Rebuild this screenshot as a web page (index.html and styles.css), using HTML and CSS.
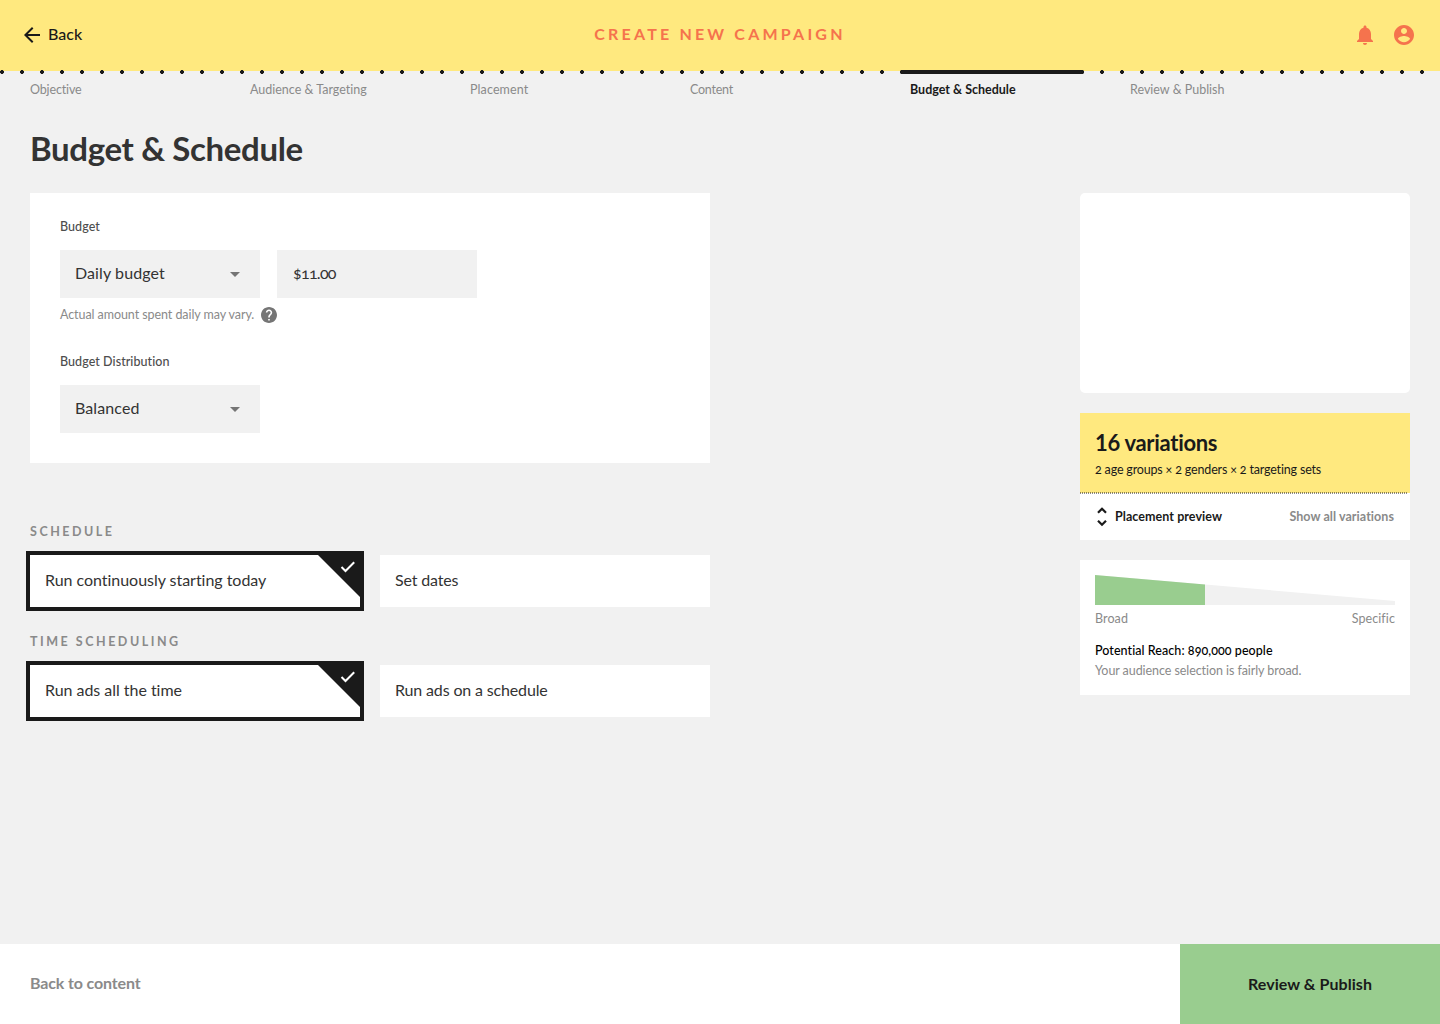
FILE: index.html
```html
<!DOCTYPE html>
<html lang="en">
<head>
<meta charset="utf-8">
<title>Create new campaign</title>
<link rel="stylesheet" href="styles.css">
</head>
<body>
<header class="topbar">
  <a class="back" href="#">
    <svg width="24" height="24" viewBox="0 0 24 24"><path d="M20 11H7.830l5.590-5.590L12 4l-8 8 8 8 1.410-1.410L7.830 13H20v-2z"/></svg>
    <span class="raised">Back</span>
  </a>
  <div class="heading raised">CREATE NEW CAMPAIGN</div>
  <div class="tools">
    <svg width="24" height="24" viewBox="0 0 24 24"><path d="M12 22c1.100 0 2-.9 2-2h-4c0 1.100.89 2 2 2zm6-6v-5c0-3.070-1.640-5.640-4.500-6.320V4c0-.83-.67-1.500-1.500-1.500s-1.500.67-1.500 1.500v.68C7.630 5.360 6 7.920 6 11v5l-2 2v1h16v-1l-2-2z"/></svg>
    <svg width="24" height="24" viewBox="0 0 24 24"><path d="M12 2C6.480 2 2 6.480 2 12s4.480 10 10 10 10-4.480 10-10S17.520 2 12 2zm0 3c1.660 0 3 1.340 3 3s-1.340 3-3 3-3-1.340-3-3 1.340-3 3-3zm0 14.200c-2.500 0-4.710-1.280-6-3.220.03-1.990 4-3.080 6-3.080 1.990 0 5.970 1.090 6 3.080-1.290 1.940-3.500 3.220-6 3.220z"/></svg>
  </div>
</header>
<nav class="steps">
  <a class="step snug">Objective</a>
  <a class="step">Audience &amp; Targeting</a>
  <a class="step loose">Placement</a>
  <a class="step tight">Content</a>
  <a class="step active">Budget &amp; Schedule</a>
  <a class="step">Review &amp; Publish</a>
</nav>
<main class="page">
  <h1 class="title">Budget &amp; Schedule</h1>
  <div class="columns">
    <div class="form">
      <section class="card budget">
        <div class="label">Budget</div>
        <div class="fields">
          <div class="field"><span class="raised">Daily budget</span><svg width="24" height="24" viewBox="0 0 24 24"><path d="M7 10l5 5 5-5z"/></svg></div>
          <div class="field amount"><span class="raised">$11.00</span></div>
        </div>
        <div class="hint"><span>Actual amount spent daily may vary.</span><svg width="16" height="16" viewBox="2 2 20 20"><path d="M12 2C6.480 2 2 6.480 2 12s4.480 10 10 10 10-4.480 10-10S17.520 2 12 2zm1 17h-2v-2h2v2zm2.070-7.750l-.9.920C13.450 12.900 13 13.500 13 15h-2v-.5c0-1.100.45-2.100 1.170-2.830l1.240-1.260c.37-.36.59-.86.59-1.410 0-1.100-.9-2-2-2s-2 .9-2 2H8c0-2.210 1.790-4 4-4s4 1.790 4 4c0 .88-.36 1.680-.93 2.250z"/></svg></div>
        <div class="label">Budget Distribution</div>
        <div class="fields">
          <div class="field"><span class="raised">Balanced</span><svg width="24" height="24" viewBox="0 0 24 24"><path d="M7 10l5 5 5-5z"/></svg></div>
        </div>
      </section>
      <h2 class="group">SCHEDULE</h2>
      <div class="options">
        <div class="option selected"><span class="raised">Run continuously starting today</span><svg class="corner" width="42" height="42" viewBox="0 0 42 42"><path d="M0 0h42v42z" fill="#1a1a1a"/><path d="M23.500 12l4 4L36.200 7.200" fill="none" stroke="#fff" stroke-width="2"/></svg></div>
        <div class="option short"><span class="raised">Set dates</span></div>
      </div>
      <h2 class="group">TIME SCHEDULING</h2>
      <div class="options">
        <div class="option selected"><span class="raised">Run ads all the time</span><svg class="corner" width="42" height="42" viewBox="0 0 42 42"><path d="M0 0h42v42z" fill="#1a1a1a"/><path d="M23.500 12l4 4L36.200 7.200" fill="none" stroke="#fff" stroke-width="2"/></svg></div>
        <div class="option short"><span class="raised">Run ads on a schedule</span></div>
      </div>
    </div>
    <aside class="side">
      <div class="preview"></div>
      <section class="variations">
        <div class="summary">
          <div class="count">16 variations</div>
          <div class="detail">2 age groups × 2 genders × 2 targeting sets</div>
        </div>
        <div class="actions">
          <svg width="14" height="20" viewBox="0 0 14 20"><path d="M3 5.700l4-4 4 4M3 13.700l4 4 4-4" fill="none" stroke="#1a1a1a" stroke-width="2.200"/></svg>
          <span class="strong">Placement preview</span>
          <span class="link">Show all variations</span>
        </div>
      </section>
      <section class="reach">
        <svg width="300" height="30" viewBox="0 0 300 30"><path d="M0 0l300 26v4H0z" fill="#f1f1f1"/><path d="M0 0l110 9.500V30H0z" fill="#99cd8f"/></svg>
        <div class="scale"><span>Broad</span><span>Specific</span></div>
        <div class="potential">Potential Reach: 890,000 people</div>
        <div class="note">Your audience selection is fairly broad.</div>
      </section>
    </aside>
  </div>
</main>
<footer class="bottombar">
  <a class="prev">Back to content</a>
  <a class="next">Review &amp; Publish</a>
</footer>
</body>
</html>
```
FILE: styles.css
```css
* { box-sizing: border-box; }
body {
  margin: 0;
  height: 1024px;
  display: flex;
  flex-direction: column;
  background: #f1f1f1;
  color: #333;
  font: 400 16px/20px Lato, sans-serif;
  font-variant-ligatures: none;
  font-variant-numeric: oldstyle-nums;
  white-space: nowrap;
}
svg { display: block; flex: none; }
.raised { padding-bottom: 2px; }
.topbar {
  position: relative;
  display: grid;
  grid-template-columns: 1fr auto 1fr;
  align-items: center;
  height: 71px;
  padding: 0 24px 1px;
  background: #ffe97f;
}
.topbar::after {
  content: "";
  position: absolute;
  left: 0;
  right: 0;
  bottom: -3px;
  height: 4px;
  background: radial-gradient(circle at 2px 2px, #1a1a1a 1.7px, transparent 2.2px) 0 0 / 20px 4px repeat-x;
}
.back { display: flex; align-items: center; gap: 4px; margin-left: -4px; color: #1a1a1a; font-weight: 500; text-decoration: none; }
.back svg { fill: #1a1a1a; }
.heading { color: #f5734d; font-weight: 700; letter-spacing: 3.2px; }
.tools { display: flex; justify-content: flex-end; gap: 15px; fill: #f5734d; }
.steps { display: grid; grid-template-columns: repeat(6, 220px); padding: 9px 0 0 30px; font-size: 12.5px; color: #8a8a8a; }
.step { position: relative; }
.loose { letter-spacing: .1px; }
.tight { letter-spacing: -.25px; }
.snug { letter-spacing: -.15px; }
.active { color: #1a1a1a; font-weight: 700; }
.active::before { content: ""; position: absolute; left: -10px; top: -10px; width: 184px; height: 4px; border-radius: 2px; background: #1a1a1a; z-index: 1; }
.page { flex: 1; padding: 28px 30px 0; }
.title { margin: 0 0 24px; font-size: 33px; line-height: 41px; font-weight: 700; letter-spacing: -.36px; }
.columns { display: flex; justify-content: space-between; }
.form { width: 680px; }
.card { background: #fff; }
.budget { height: 270px; padding: 24px 30px 0; }
.label { margin-bottom: 13px; font-size: 12.5px; font-weight: 500; letter-spacing: .06px; color: #4d4d4d; }
.fields { display: flex; gap: 17px; }
.field { display: flex; align-items: center; justify-content: space-between; width: 200px; height: 48px; padding: 0 13px 0 15px; background: #f1f1f1; letter-spacing: .1px; }
.field svg { fill: #757575; }
.amount { padding-left: 16px; letter-spacing: -.7px; }
.hint { display: flex; align-items: center; gap: 7px; height: 18px; margin: 8px 0 28px; font-size: 12.5px; letter-spacing: -.07px; color: #8a8a8a; }
.hint svg { fill: #757575; }
.group { margin: 0 0 13px; font-size: 12.5px; line-height: 20px; font-weight: 700; letter-spacing: 2.52px; color: #8a8a8a; }
.budget + .group { margin-top: 59px; }
.options { display: flex; gap: 20px; margin-bottom: 25px; }
.option { position: relative; display: flex; align-items: center; width: 330px; height: 52px; padding: 0 15px; background: #fff; letter-spacing: -.03px; }
.short { letter-spacing: -.15px; }
.selected { box-shadow: 0 0 0 4px #1a1a1a; }
.corner { position: absolute; top: 0; right: 0; }
.side { display: flex; flex-direction: column; gap: 20px; width: 330px; }
.preview { height: 200px; border-radius: 5px; background: #fff; }
.variations { background: #fff; color: #1a1a1a; }
.summary { position: relative; height: 80px; padding: 16px 15px 0; background: #ffe97f; }
.summary::after { content: ""; position: absolute; left: 0; right: 2px; bottom: -1px; height: 2px; background: repeating-linear-gradient(90deg, rgba(26,26,26,.5) 0 1px, transparent 1px 2px); }
.count { font-size: 22px; line-height: 28px; font-weight: 700; letter-spacing: -.3px; font-variant-numeric: lining-nums; }
.detail { margin-top: 3px; font-size: 12.5px; letter-spacing: -.17px; }
.actions { display: flex; align-items: center; height: 47px; padding: 0 16px 0 15px; font-size: 12.5px; font-weight: 700; letter-spacing: .06px; }
.strong { margin-left: 6px; }
.link { margin-left: auto; color: #8a8a8a; }
.reach { height: 135px; padding: 15px 15px 0; background: #fff; font-size: 12.5px; color: #8a8a8a; }
.scale { display: flex; justify-content: space-between; margin: 4px 0 12px; letter-spacing: .09px; }
.potential { color: #000; font-weight: 500; letter-spacing: .06px; }
.note { letter-spacing: -.07px; }
.bottombar { display: flex; height: 80px; background: #fff; font-weight: 700; }
.prev { flex: 1; padding: 29px 30px 0; color: #8a8a8a; letter-spacing: -.14px; }
.next { display: flex; align-items: center; justify-content: center; width: 260px; background: #99cd8f; color: #1a1a1a; letter-spacing: .07px; }
```
